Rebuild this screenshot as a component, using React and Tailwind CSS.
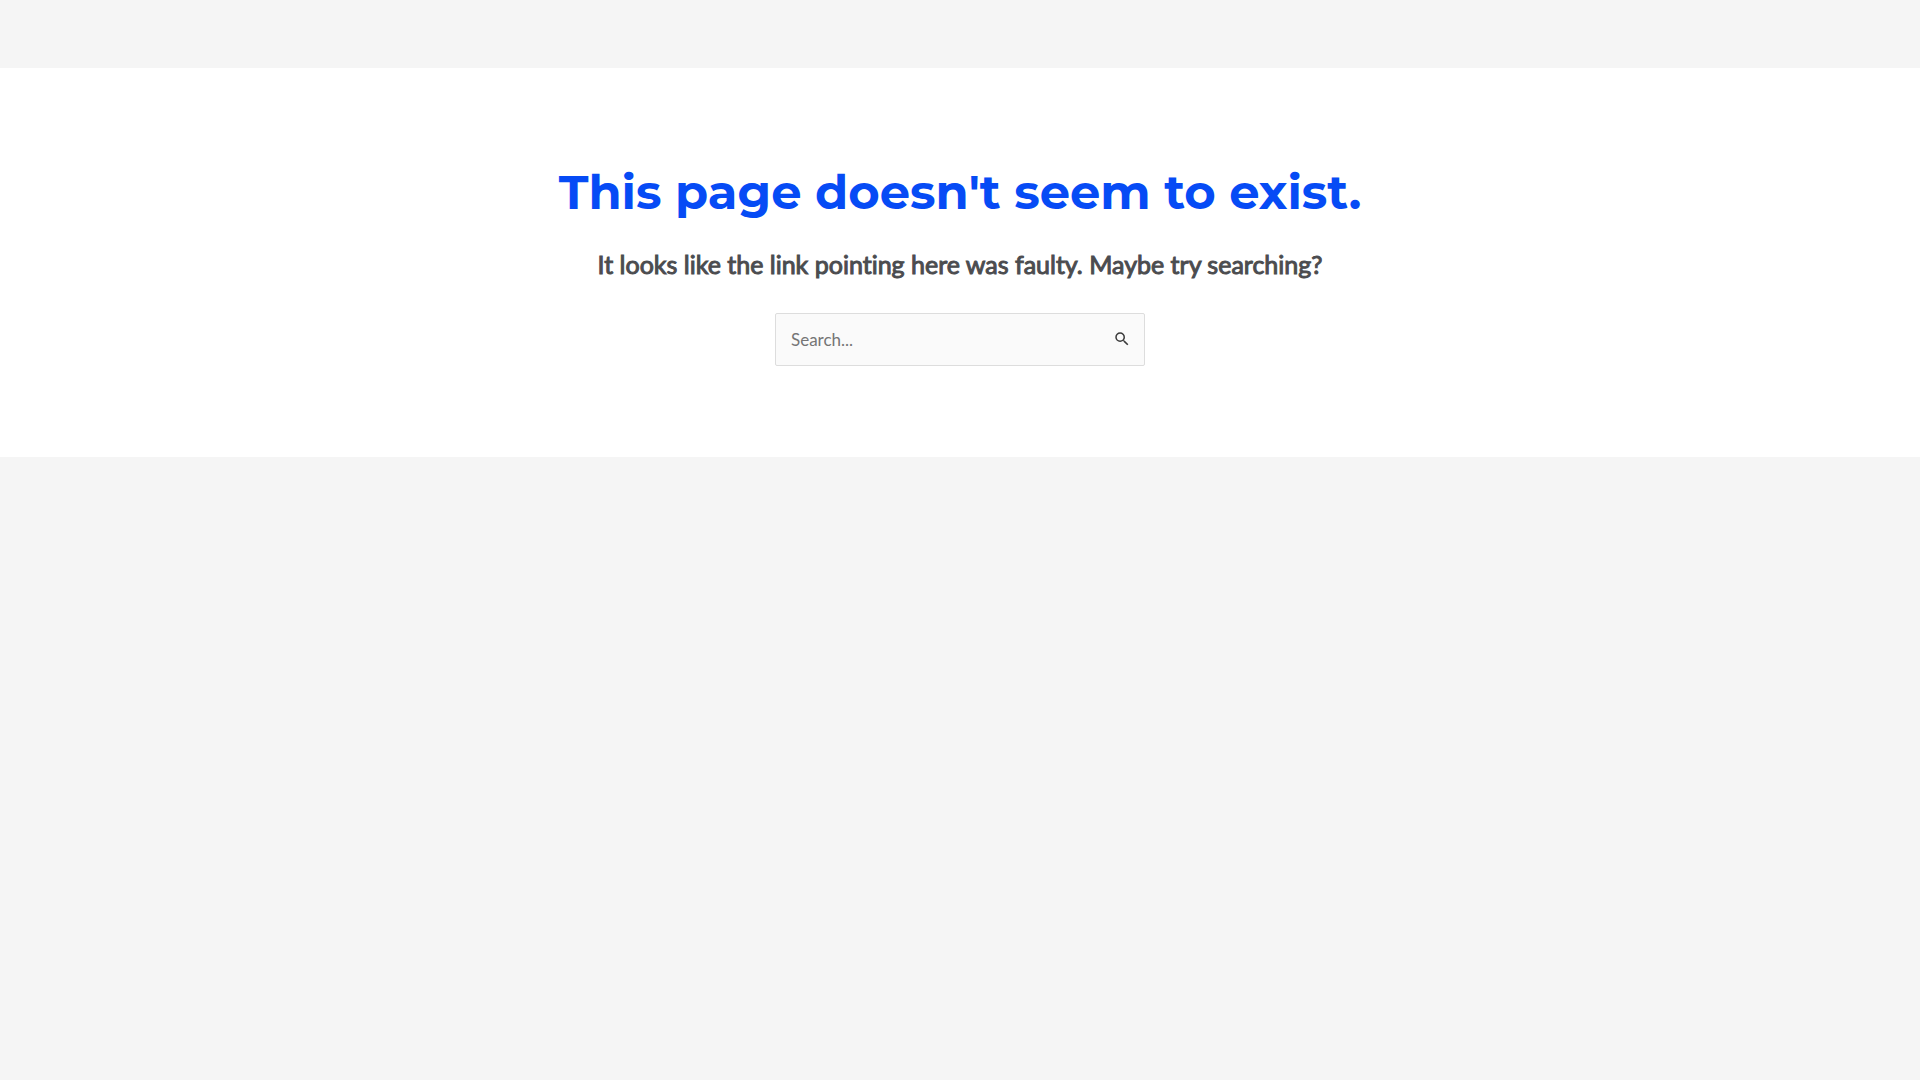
import React, { useState } from 'react';
import { MdSearch } from 'react-icons/md';

const SearchForm = () => {
  const [query, setQuery] = useState('');

  return (
    <form
      role="search"
      onSubmit={(e) => e.preventDefault()}
      className="mx-auto flex w-full max-w-[370px] items-center rounded-xs border border-[#dddddd] bg-[#fafafa]"
    >
      <input
        type="search"
        aria-label="Search for"
        placeholder="Search..."
        value={query}
        onChange={(e) => setQuery(e.target.value)}
        className="min-w-0 flex-1 bg-transparent py-3 pl-[15px] text-[17px] leading-[27px] text-[#666666] outline-none placeholder:text-[#757575]"
      />
      <button type="submit" aria-label="Search" className="pr-[13px] pb-0.5 pl-3 text-[#3a3a3a]">
        <MdSearch className="size-[18px]" />
      </button>
    </form>
  );
};

const App = () => {
  return (
    <div className="min-h-screen bg-[#f5f5f5] pt-[68px] font-['Lato',sans-serif] text-[#4b4c4f]">
      <main className="bg-white px-5 pt-[91px] pb-[91px] text-center">
        <h1 className="mb-5 font-['Montserrat','Inter',sans-serif] text-5xl leading-[67px] font-bold text-[#064bf5]">
          This page doesn't seem to exist.
        </h1>
        <p className="mb-[31px] text-[25px] leading-9 font-normal [-webkit-text-stroke:1px] [font-variant-ligatures:none]">
          It looks like the link pointing here was faulty. Maybe try searching?
        </p>
        <SearchForm />
      </main>
    </div>
  );
};

export default App;
